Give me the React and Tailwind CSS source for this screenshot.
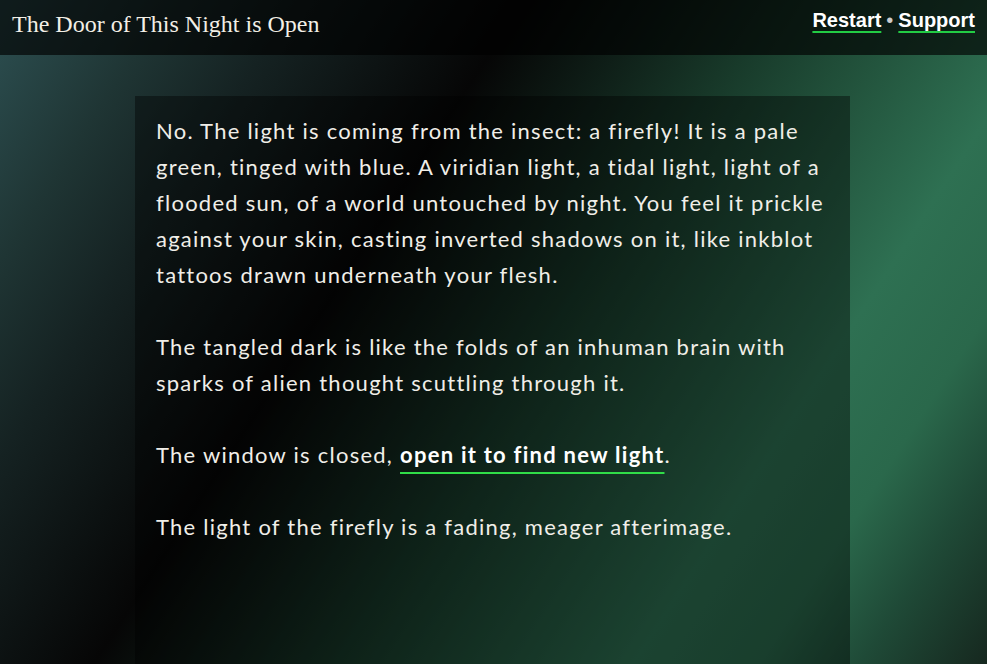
const PARAS = [
  'No. The light is coming from the insect: a firefly! It is a pale green, tinged with blue. A viridian light, a tidal light, light of a flooded sun, of a world untouched by night. You feel it prickle against your skin, casting inverted shadows on it, like inkblot tattoos drawn underneath your flesh.',
  'The tangled dark is like the folds of an inhuman brain with sparks of alien thought scuttling through it.',
]

export default function App() {
  return (
    <div className="min-h-screen flex flex-col bg-[linear-gradient(123deg,#2d5052_0%,#1f3534_12%,#152222_21%,#060606_37%,#0f1f18_46%,#183a2a_55%,#21503a_63%,#2e7052_75%,#2a684b_84%,#1f4a37_91%,#16281f_100%)]">
      <header className="h-[55px] shrink-0 flex items-start justify-between px-3 pt-[6px] bg-black/65">
        <h1 className="text-[#f2efe6] text-[24px] font-['Liberation_Serif',serif]">The Door of This Night is Open</h1>
        <nav className="text-white text-[20px] leading-[26px] pt-[1px] font-bold font-['Liberation_Sans',Arial,sans-serif]">
          <a className="underline decoration-[#22cc44] decoration-[1.5px] underline-offset-[4px]">Restart</a>
          <span className="mx-[5px] text-[#ccc] font-normal">•</span>
          <a className="underline decoration-[#22cc44] decoration-[1.5px] underline-offset-[4px]">Support</a>
        </nav>
      </header>
      <main className="flex-1 flex justify-center pt-[41px] pr-[2px]">
        <section className="w-[715px] bg-black/40 px-[21px] pt-[17px] text-[#f0eee8] text-[22px] tracking-[1.25px] leading-[36px] font-['Lato',sans-serif]">
          {PARAS.map((p) => (
            <p key={p} className="mb-9">{p}</p>
          ))}
          <p className="mb-9">
            The window is closed,{' '}
            <a className="font-bold text-white underline decoration-[#30dd48] decoration-[1.5px] underline-offset-[9px]">open it to find new light</a>.
          </p>
          <p>The light of the firefly is a fading, meager afterimage.</p>
        </section>
      </main>
    </div>
  )
}
